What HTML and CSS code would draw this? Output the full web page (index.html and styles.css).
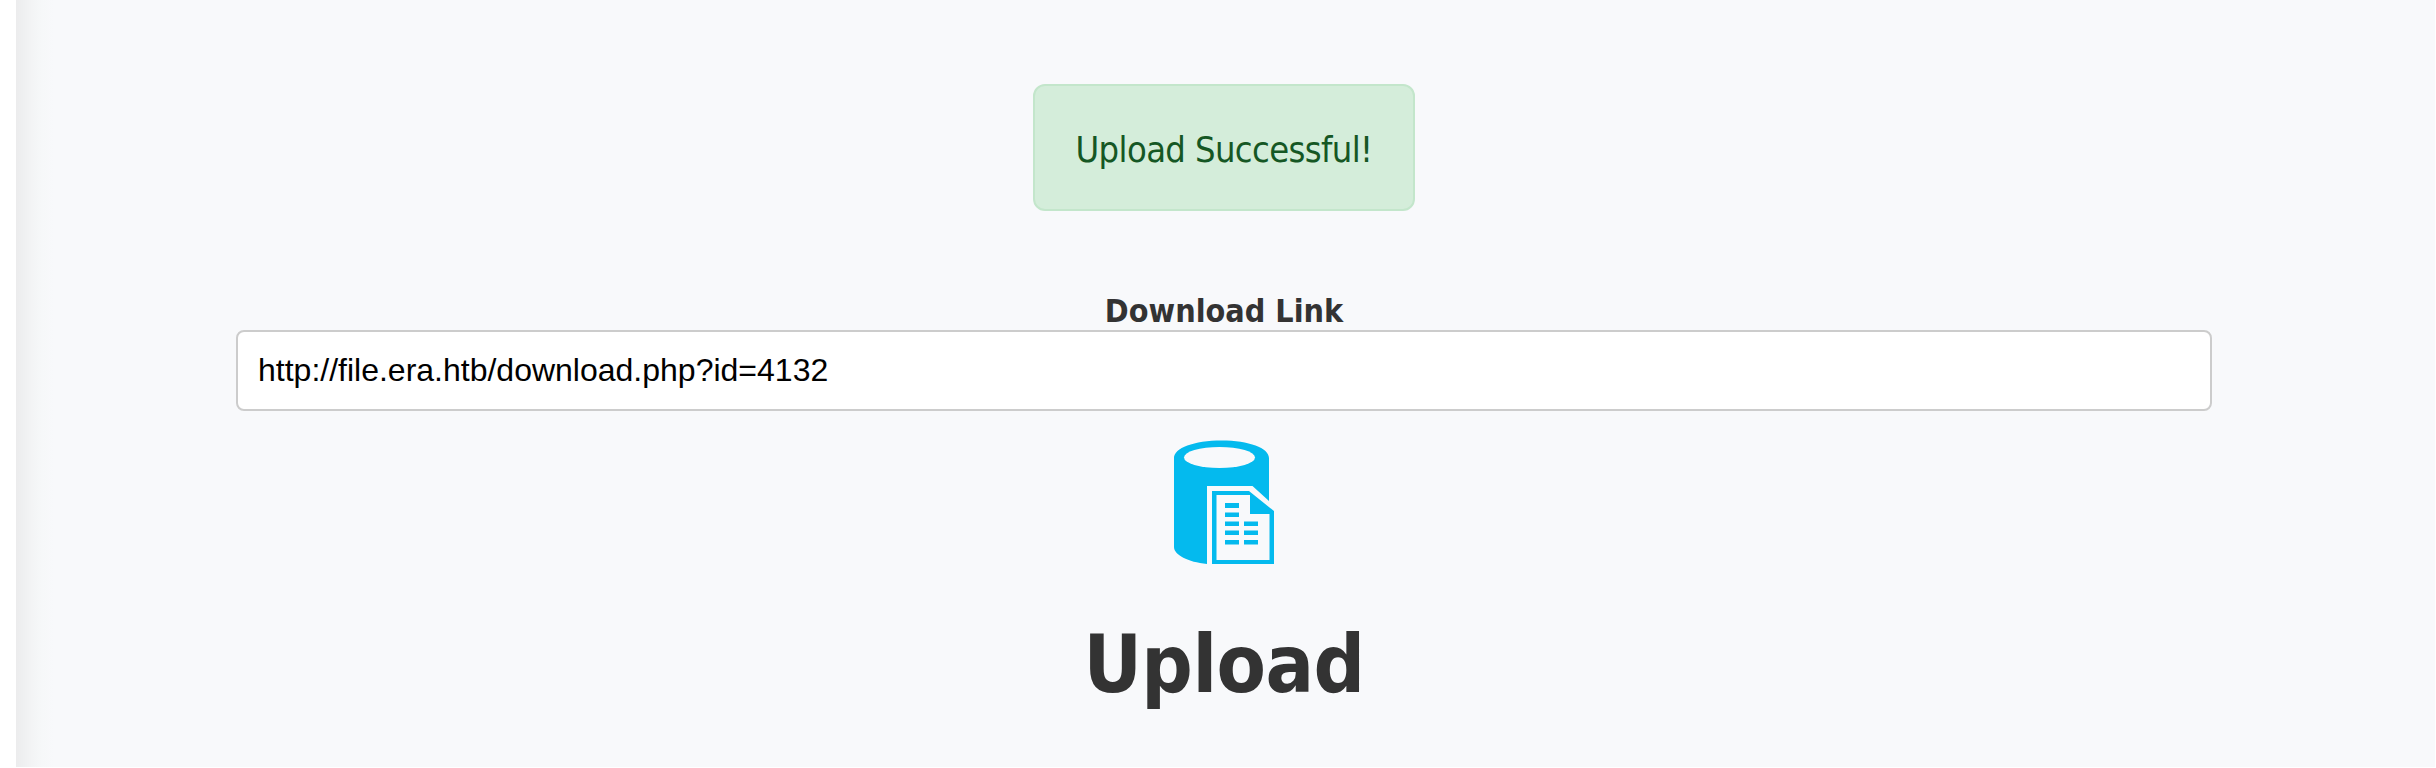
FILE: index.html
```html
<!DOCTYPE html>
<html lang="en">
<head>
<meta charset="utf-8">
<title>Upload</title>
<link rel="stylesheet" href="styles.css">
</head>
<body>
<main class="content">
  <div class="alert"><span class="alert-text">Upload Successful!</span></div>
  <label class="link-label" for="link"><span class="label-text">Download Link</span></label>
  <input class="link-field" id="link" type="text" value="http://file.era.htb/download.php?id=4132" readonly>
  <svg class="logo" viewBox="0 0 150 160" aria-hidden="true">
    <path fill="#04baee" d="M24 38C24 28 44 20.500 71.500 20.500S119 28 119 38V81L102.500 66H57V144C38 142 24 135 24 127Z"/>
    <ellipse cx="69.500" cy="37.500" rx="35.500" ry="10.500" fill="#f8f9fb"/>
    <path fill="#04baee" fill-rule="evenodd" d="M62 71H99L124 91V144H62ZM66.500 75V140H119.500V94H100V75Z"/>
    <path fill="#04baee" d="M75 83h14v5H75zM75 92.500h14v4.500H75zM75 101.500h14v4.500H75zM75 110.500h14v4.500H75zM75 120h14v4.500H75zM94 101.500h14v4.500H94zM94 110.500h14v4.500H94zM94 120h14v4.500H94z"/>
  </svg>
  <h1 class="title"><span class="title-text">Upload</span></h1>
</main>
</body>
</html>
```
FILE: styles.css
```css
* { box-sizing: border-box; }
body {
  margin: 0;
  height: 768px;
  padding: 0 1px 1px 16px;
  background: #fff;
  color: #333;
  font-family: Tahoma, "DejaVu Sans Condensed", "DejaVu Sans", sans-serif;
  font-stretch: condensed;
  overflow: hidden;
}
.content {
  height: 767px;
  padding: 84px 223px 0 220px;
  display: flex;
  flex-direction: column;
  align-items: center;
  background: linear-gradient(90deg, #ececed 0, #eeeff0 6px, #f3f4f5 16px, #f6f8f9 26px, #f8f9fb 38px);
}
.alert {
  width: 382px;
  height: 127px;
  padding-top: 4px;
  display: flex;
  align-items: center;
  justify-content: center;
  background: #d4edda;
  border: 2px solid #c3e6cb;
  border-radius: 12px;
  color: #155724;
  font-size: 36px;
  line-height: 44px;
  white-space: nowrap;
}
.alert-text { letter-spacing: -0.62px; }
.link-label {
  margin-top: 81px;
  height: 38px;
  font-size: 32px;
  line-height: 39px;
  font-weight: bold;
  white-space: nowrap;
}
.link-field {
  width: 1976px;
  height: 81px;
  padding: 0 20px 1px;
  border: 2px solid #ccc;
  border-radius: 8px;
  background: #fff;
  color: #000;
  font: 32px Arial, "Liberation Sans", sans-serif;
  outline: 0;
}
.logo {
  display: block;
  width: 150px;
  height: 160px;
  margin: 9px 0 0 2px;
}
.title {
  margin: 37px 0 0;
  font-size: 80px;
  line-height: 96px;
  font-weight: bold;
}
.title-text { letter-spacing: -0.5px; }
```
